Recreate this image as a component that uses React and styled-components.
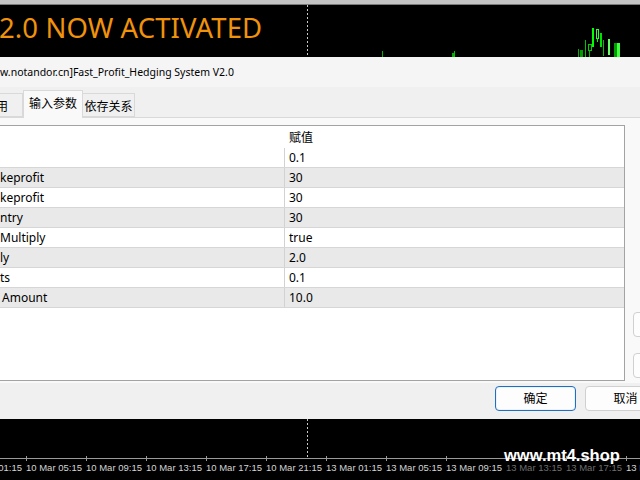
import React from 'react';
import styled, { createGlobalStyle } from 'styled-components';

const GlobalStyle = createGlobalStyle`
  html, body {
    margin: 0;
    padding: 0;
    width: 640px;
    height: 480px;
    overflow: hidden;
    background: #000;
  }
  * { box-sizing: border-box; }
`;

const UI_FONT = `"Noto Sans", "Noto Sans CJK SC", sans-serif`;

const Page = styled.div`
  width: 640px;
  height: 480px;
  overflow: hidden;
  display: flex;
  flex-direction: column;
  font-family: ${UI_FONT};
`;

/* ---------- top chart ---------- */

const TopStrip = styled.div`
  height: 5px;
  background: #c4c4c4;
  border-bottom: 1px solid #7a7a7a;
  flex: none;
`;

const TopChart = styled.div`
  position: relative;
  height: 52px;
  flex: none;
  background: #000;
  display: flex;
  align-items: center;
`;

const ChartSvg = styled.svg`
  position: absolute;
  left: 0;
  top: 0;
`;

const Banner = styled.div`
  position: relative;
  margin-left: -1px;
  margin-top: -7px;
  color: #f0920c;
  font-family: "Noto Sans", sans-serif;
  font-size: 27.5px;
  line-height: 1;
  letter-spacing: 0.1px;
`;

/* ---------- dialog ---------- */

const Dialog = styled.div`
  width: 700px;
  height: 362px;
  flex: none;
  background: #f0f0f0;
  display: flex;
  flex-direction: column;
  font-size: 12px;
  color: #000;
`;

const TitleBar = styled.div`
  height: 30px;
  background: #f5f5f6;
  display: flex;
  align-items: center;
  padding-bottom: 1px;
  font-size: 10.5px;
  white-space: nowrap;
`;

const Tabs = styled.div`
  height: 30px;
  display: flex;
  align-items: flex-end;
`;

const Tab = styled.div`
  height: ${p => (p.$active ? 28 : 24)}px;
  margin-bottom: ${p => (p.$active ? -1 : 0)}px;
  width: ${p => p.$w}px;
  margin-left: ${p => p.$ml || 0}px;
  padding: 0 ${p => p.$pad || 0}px;
  background: ${p => (p.$active ? '#f9f9f9' : '#f0f0f0')};
  border: 1px solid #d9d9d9;
  border-bottom: ${p => (p.$active ? 'none' : '1px solid #d9d9d9')};
  display: flex;
  align-items: center;
  justify-content: ${p => p.$align || 'center'};
  padding-bottom: ${p => (p.$active ? 4 : 0)}px;
  padding-top: ${p => (p.$active ? 0 : 2)}px;
  white-space: nowrap;
  position: relative;
  z-index: ${p => (p.$active ? 1 : 0)};
`;

const Panel = styled.div`
  height: 266px;
  background: #f9f9f9;
  border-top: 1px solid #d9d9d9;
  padding-top: 7px;
  display: flex;
  gap: 8px;
`;

const Table = styled.div`
  margin-left: -1px;
  width: 626px;
  height: 256px;
  background: #fff;
  border: 1px solid #a3a3a3;
  display: flex;
  flex-direction: column;
`;

const HeaderRow = styled.div`
  height: 22px;
  display: flex;
  align-items: center;
`;

const Row = styled.div`
  height: 20px;
  display: flex;
  background: ${p => (p.$alt ? '#e9e9e9' : '#fff')};
  border-bottom: 1px solid #d6d6d6;
`;

const NameCell = styled.div`
  width: 284px;
  flex: none;
  display: flex;
  align-items: center;
  padding-left: ${p => p.$indent || 0}px;
  white-space: nowrap;
  overflow: hidden;
`;

const ValueCell = styled.div`
  flex: 1;
  display: flex;
  align-items: center;
  padding-left: 4px;
  border-left: ${p => (p.$plain ? 'none' : '1px solid #d2d2d2')};
  margin-left: ${p => (p.$plain ? 1 : 0)}px;
`;

const SideButtons = styled.div`
  display: flex;
  flex-direction: column;
  gap: 16px;
  padding-top: 187px;
`;

const WinButton = styled.button`
  width: ${p => p.$w || 81}px;
  height: 25px;
  flex: none;
  font-family: ${UI_FONT};
  font-size: 12px;
  color: #000;
  background: #fdfdfd;
  border: 1px solid ${p => (p.$default ? '#1f6fbf' : '#d0d0d0')};
  box-shadow: ${p => (p.$default ? 'inset 0 0 0 1px #eaf2fb' : 'none')};
  border-radius: 4px;
  padding: 0;
  padding-bottom: 1px;
`;

const Footer = styled.div`
  flex: 1;
  display: flex;
  justify-content: flex-end;
  gap: 9px;
  padding-top: 3px;
  padding-right: 34px;
`;

/* ---------- bottom chart ---------- */

const BottomChart = styled.div`
  position: relative;
  flex: 1;
  background: #000;
  display: flex;
  flex-direction: column;
`;

const PlotArea = styled.div`
  height: 39px;
  position: relative;
`;

const Axis = styled.div`
  border-top: 1px solid #9a9a9a;
  display: flex;
  margin-left: -34px;
`;

const AxisCell = styled.div`
  width: 60px;
  flex: none;
  position: relative;
  padding-top: 3px;
  font-family: "Liberation Sans", sans-serif;
  font-size: 9.5px;
  line-height: 11px;
  color: ${p => (p.$dim ? '#6e6e6e' : '#d4d4d4')};
  white-space: nowrap;

  &::before {
    content: '';
    position: absolute;
    left: 0;
    top: -3px;
    width: 1px;
    height: 5px;
    background: #9a9a9a;
  }
`;

const Watermark = styled.div`
  position: absolute;
  left: 504px;
  top: 28px;
  color: #fff;
  font-family: "Liberation Sans", sans-serif;
  font-weight: bold;
  font-size: 16.5px;
  line-height: 1;
`;

const params = [
  { name: '', value: '0.1' },
  { name: 'keprofit', value: '30' },
  { name: 'keprofit', value: '30' },
  { name: 'ntry', value: '30' },
  { name: 'Multiply', value: 'true', indent: -3 },
  { name: 'ly', value: '2.0' },
  { name: 'ts', value: '0.1' },
  { name: 'Amount', value: '10.0', indent: 2 },
];

const axisLabels = [
  '10 Mar 01:15', '10 Mar 05:15', '10 Mar 09:15', '10 Mar 13:15',
  '10 Mar 17:15', '10 Mar 21:15', '13 Mar 01:15', '13 Mar 05:15',
  '13 Mar 09:15', '13 Mar 13:15', '13 Mar 17:15', '13 Mar 21:15',
];

// candles near the right edge of the upper chart: [x, y, w, h, fill, stroke]
const candles = [
  [578, 49, 1, 8, '#00b000'],
  [580, 50, 3, 7, '#00a000'],
  [585, 40, 1, 17, '#00c000'],
  [588, 44, 3, 6, 'none', '#00d000'],
  [589, 50, 1, 7, '#00c000'],
  [592, 28, 2, 19, '#00ff00'],
  [596, 29, 2, 9, 'none', '#33ff33'],
  [597, 38, 1, 4, '#00ff00'],
  [600, 33, 2, 14, '#00e000'],
  [603, 40, 1, 16, '#00c000'],
  [608, 39, 2, 16, '#66ff66'],
  [614, 43, 3, 14, '#00a000'],
  [617, 43, 3, 14, '#44ff44'],
];

const TopChartDrawing = () => (
  <ChartSvg width="640" height="52" viewBox="0 5 640 52">
    <line x1="307.5" y1="5" x2="307.5" y2="57" stroke="#c8c8c8" strokeDasharray="2 2" />
    <rect x="382" y="51" width="1" height="6" fill="#00b000" />
    <rect x="452" y="53" width="2" height="4" fill="#00b000" />
    <rect x="454" y="51" width="1" height="6" fill="#00c000" />
    {candles.map(([x, y, w, h, fill, stroke], i) => (
      <rect
        key={i}
        x={stroke ? x + 0.5 : x}
        y={stroke ? y + 0.5 : y}
        width={w}
        height={h}
        fill={fill}
        stroke={stroke || 'none'}
        strokeWidth="1"
      />
    ))}
  </ChartSvg>
);

const App = () => {
  return (
    <>
      <GlobalStyle />
      <Page>
        <TopStrip />
        <TopChart>
          <TopChartDrawing />
          <Banner>2.0 NOW ACTIVATED</Banner>
        </TopChart>

        <Dialog>
          <TitleBar>w.notandor.cn]Fast_Profit_Hedging System V2.0</TitleBar>
          <Tabs>
            <Tab $w={64} $ml={-41} $align="flex-end" $pad={14}>用</Tab>
            <Tab $active $w={60}>输入参数</Tab>
            <Tab $w={53} $ml={-1}>依存关系</Tab>
          </Tabs>
          <Panel>
            <Table>
              <HeaderRow>
                <NameCell />
                <ValueCell $plain>赋值</ValueCell>
              </HeaderRow>
              {params.map((p, i) => (
                <Row key={i} $alt={i % 2 === 1}>
                  <NameCell $indent={p.indent}>{p.name}</NameCell>
                  <ValueCell>{p.value}</ValueCell>
                </Row>
              ))}
            </Table>
            <SideButtons>
              <WinButton $w={60} />
              <WinButton $w={60} />
            </SideButtons>
          </Panel>
          <Footer>
            <WinButton $default>确定</WinButton>
            <WinButton>取消</WinButton>
          </Footer>
        </Dialog>

        <BottomChart>
          <PlotArea>
            <svg width="640" height="39" style={{ display: 'block' }}>
              <line x1="307.5" y1="0" x2="307.5" y2="39" stroke="#c8c8c8" strokeDasharray="2 2" />
            </svg>
          </PlotArea>
          <Axis>
            {axisLabels.map((label, i) => (
              <AxisCell key={i} $dim={i === 9 || i === 10}>{label}</AxisCell>
            ))}
          </Axis>
          <Watermark>www.mt4.shop</Watermark>
        </BottomChart>
      </Page>
    </>
  );
};

export default App;
